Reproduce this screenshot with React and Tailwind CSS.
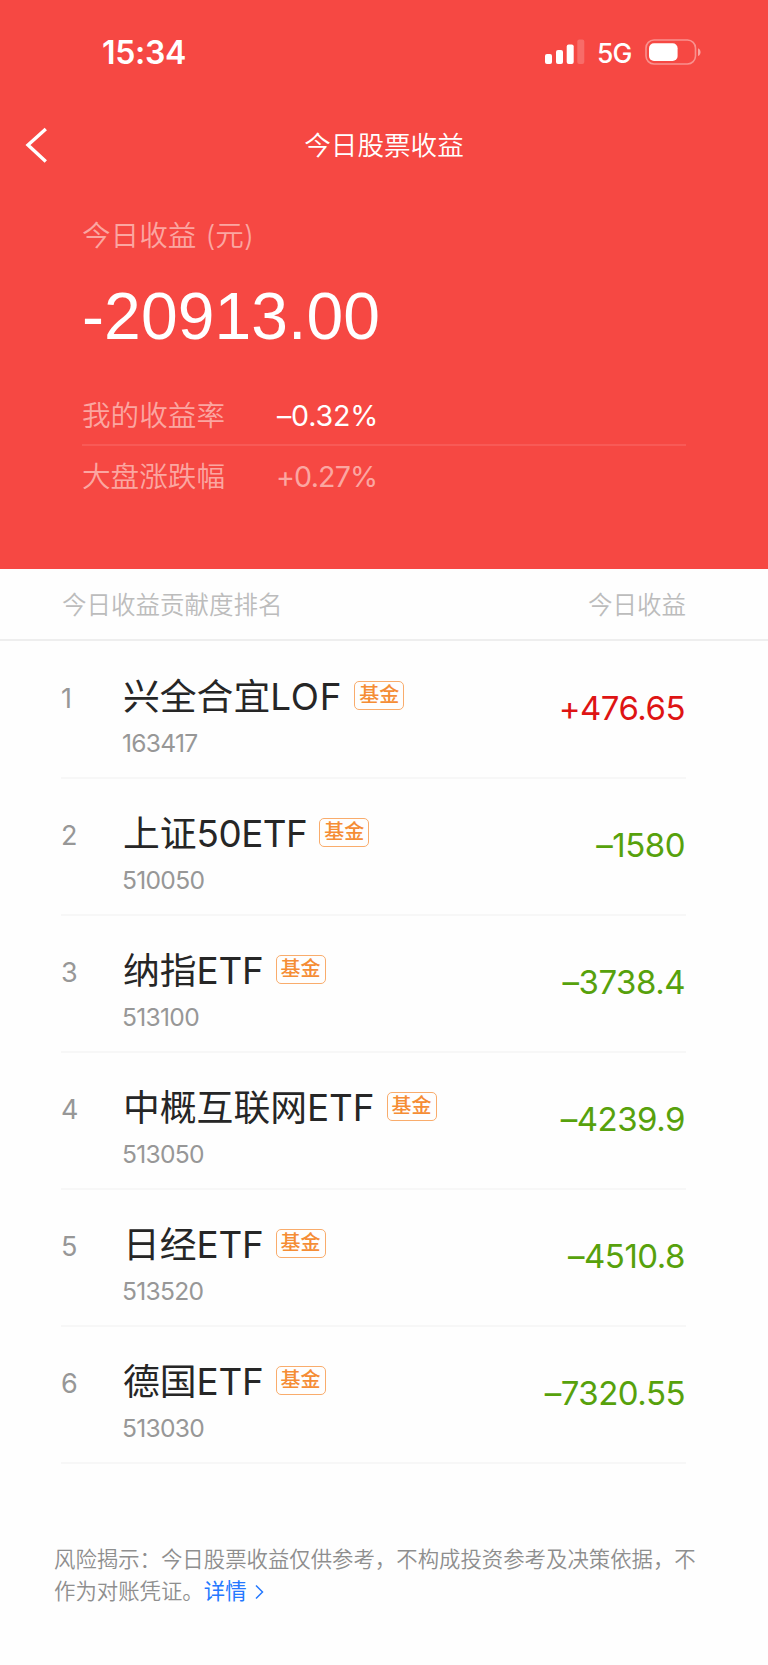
const FUNDS = [
  { name: "兴全合宜", suffix: "LOF", spacing: "tracking-[0.8px]", code: "163417", amount: "+476.65" },
  { name: "上证", suffix: "50ETF", spacing: "tracking-[-0.5px]", code: "510050", amount: "–1580" },
  { name: "纳指", suffix: "ETF", spacing: "tracking-[-0.2px]", code: "513100", amount: "–3738.4" },
  { name: "中概互联网", suffix: "ETF", spacing: "tracking-[0px]", code: "513050", amount: "–4239.9" },
  { name: "日经", suffix: "ETF", spacing: "tracking-[-0.2px]", code: "513520", amount: "–4510.8" },
  { name: "德国", suffix: "ETF", spacing: "tracking-[-0.2px]", code: "513030", amount: "–7320.55" },
];

function StatusBar() {
  return (
    <div className="flex h-[106px] items-center justify-between pl-[102px] pr-[66px]">
      <span className="text-[32px] leading-10 font-semibold tracking-[-0.3px]">15:34</span>
      <div className="flex items-center">
        <svg className="-mt-[3px]" width="40" height="26" viewBox="0 0 40 26" fill="#fff">
          <rect x="0" y="15" width="7" height="10" rx="2" />
          <rect x="11" y="11" width="7" height="14" rx="2" />
          <rect x="21.7" y="5.5" width="7" height="19.5" rx="2" />
          <rect x="32.3" y="0.5" width="7" height="24.5" rx="2" opacity=".2" />
        </svg>
        <span className="ml-[12px] w-[35px] text-[26.5px] leading-8 font-medium tracking-[-0.9px]">5G</span>
        <svg className="-mt-[3px] ml-[13px]" width="57" height="26" viewBox="0 0 57 26">
          <rect x="1" y="1" width="49.5" height="24" rx="8" fill="none" stroke="#fff" strokeOpacity=".4" strokeWidth="1.6" />
          <rect x="4" y="4.3" width="28.6" height="17.6" rx="5" fill="#fff" />
          <path d="M53 9.2c3.4 1.2 3.4 6.6 0 7.8z" fill="#fff" fillOpacity=".5" />
        </svg>
      </div>
    </div>
  );
}

function Tag() {
  return (
    <span className="mb-[3px] ml-[12px] flex h-[29px] w-[50px] items-center justify-center rounded-[5px] border border-[#f9ac6c] text-[20px] leading-none font-medium text-[#f58d35]">
      <span className="-mt-px">基金</span>
    </span>
  );
}

function FundRow({ rank, fund }) {
  return (
    <li className="flex h-[137px] border-b-2 border-[#f7f7f7]">
      <span className="w-[62px] pt-[41px] text-[27px] leading-[32px] text-[#979797]">{rank}</span>
      <div className="flex-1">
        <div className="mt-[32px] flex h-[46px] items-center text-[36.8px] leading-[46px] text-[#262626]">
          <span>{fund.name}</span>
          <span className={fund.spacing}>{fund.suffix}</span>
          <Tag />
        </div>
        <div className="-ml-px mt-[8px] text-[24.6px] leading-[30px] tracking-[-0.7px] text-[#979797]">{fund.code}</div>
      </div>
      <span
        className={
          fund.amount.startsWith("+")
            ? "pt-[45px] pr-px text-[33px] leading-[42px] tracking-[-0.5px] text-[#de1414]"
            : "pt-[45px] pr-px text-[33px] leading-[42px] tracking-[-0.5px] text-[#57a10c]"
        }
      >
        {fund.amount}
      </span>
    </li>
  );
}

export default function App() {
  return (
    <div className="h-[1665px] w-[768px] bg-[#fefefe] font-['Inter','Noto_Sans_CJK_SC',sans-serif] whitespace-nowrap">
      <header className="h-[568.5px] bg-[#f64843] text-white">
        <StatusBar />
        <div className="grid h-[80px] grid-cols-[1fr_auto_1fr] items-center">
          <svg className="-mt-[3px] ml-[25px]" width="24" height="38" viewBox="0 0 24 38" fill="none" stroke="#fff" strokeWidth="3.4">
            <path d="M20.8 3 3 19l17.8 16.6" />
          </svg>
          <h1 className="-mt-[3px] text-[26.6px] leading-10 font-[350]">今日股票收益</h1>
        </div>
        <div className="px-[82px]">
          <div className="mt-[30px] text-[28.6px] leading-[40px] font-[350] text-[#fba6a1] [word-spacing:1px]">今日收益 (元)</div>
          <div className="mt-[22px] font-['Liberation_Sans',sans-serif] text-[66px] leading-[76px] tracking-[0.1px]">-20913.00</div>
          <div className="mt-[31px] flex h-[61px] items-center border-b-2 border-[#f85a56] pt-[3px] text-[28.6px]">
            <span className="w-[195px] font-[350] text-[#fba6a1]">我的收益率</span>
            <span className="tracking-[-0.2px]">–0.32%</span>
          </div>
          <div className="flex h-[62px] items-center text-[28.6px] font-[350] text-[#fba6a1]">
            <span className="w-[194px]">大盘涨跌幅</span>
            <span className="font-normal tracking-[-0.8px]">+0.27%</span>
          </div>
        </div>
      </header>
      <div className="flex h-[72.5px] items-center justify-between border-b-2 border-[#eee] pt-[3px] pr-[82px] pl-[62px] text-[24.5px] font-[350] text-[#bcbcbc]">
        <span>今日收益贡献度排名</span>
        <span>今日收益</span>
      </div>
      <ol className="pt-px pr-[82px] pl-[61px]">
        {FUNDS.map((fund, i) => (
          <FundRow key={fund.code} rank={i + 1} fund={fund} />
        ))}
      </ol>
      <footer className="mt-[79px] pl-[54px] text-[21.4px] leading-[32px] font-[350] text-[#8e8e8e]">
        风险揭示：今日股票收益仅供参考，不构成投资参考及决策依据，不
        <div className="flex items-center">
          作为对账凭证。
          <span className="font-normal text-[#2478ff]">详情</span>
          <svg className="mt-[2px] ml-[7px]" width="11" height="16" viewBox="0 0 11 16" fill="none" stroke="#2478ff" strokeWidth="1.5">
            <path d="m2 1.5 6.5 6.5L2 14.5" />
          </svg>
        </div>
      </footer>
    </div>
  );
}
